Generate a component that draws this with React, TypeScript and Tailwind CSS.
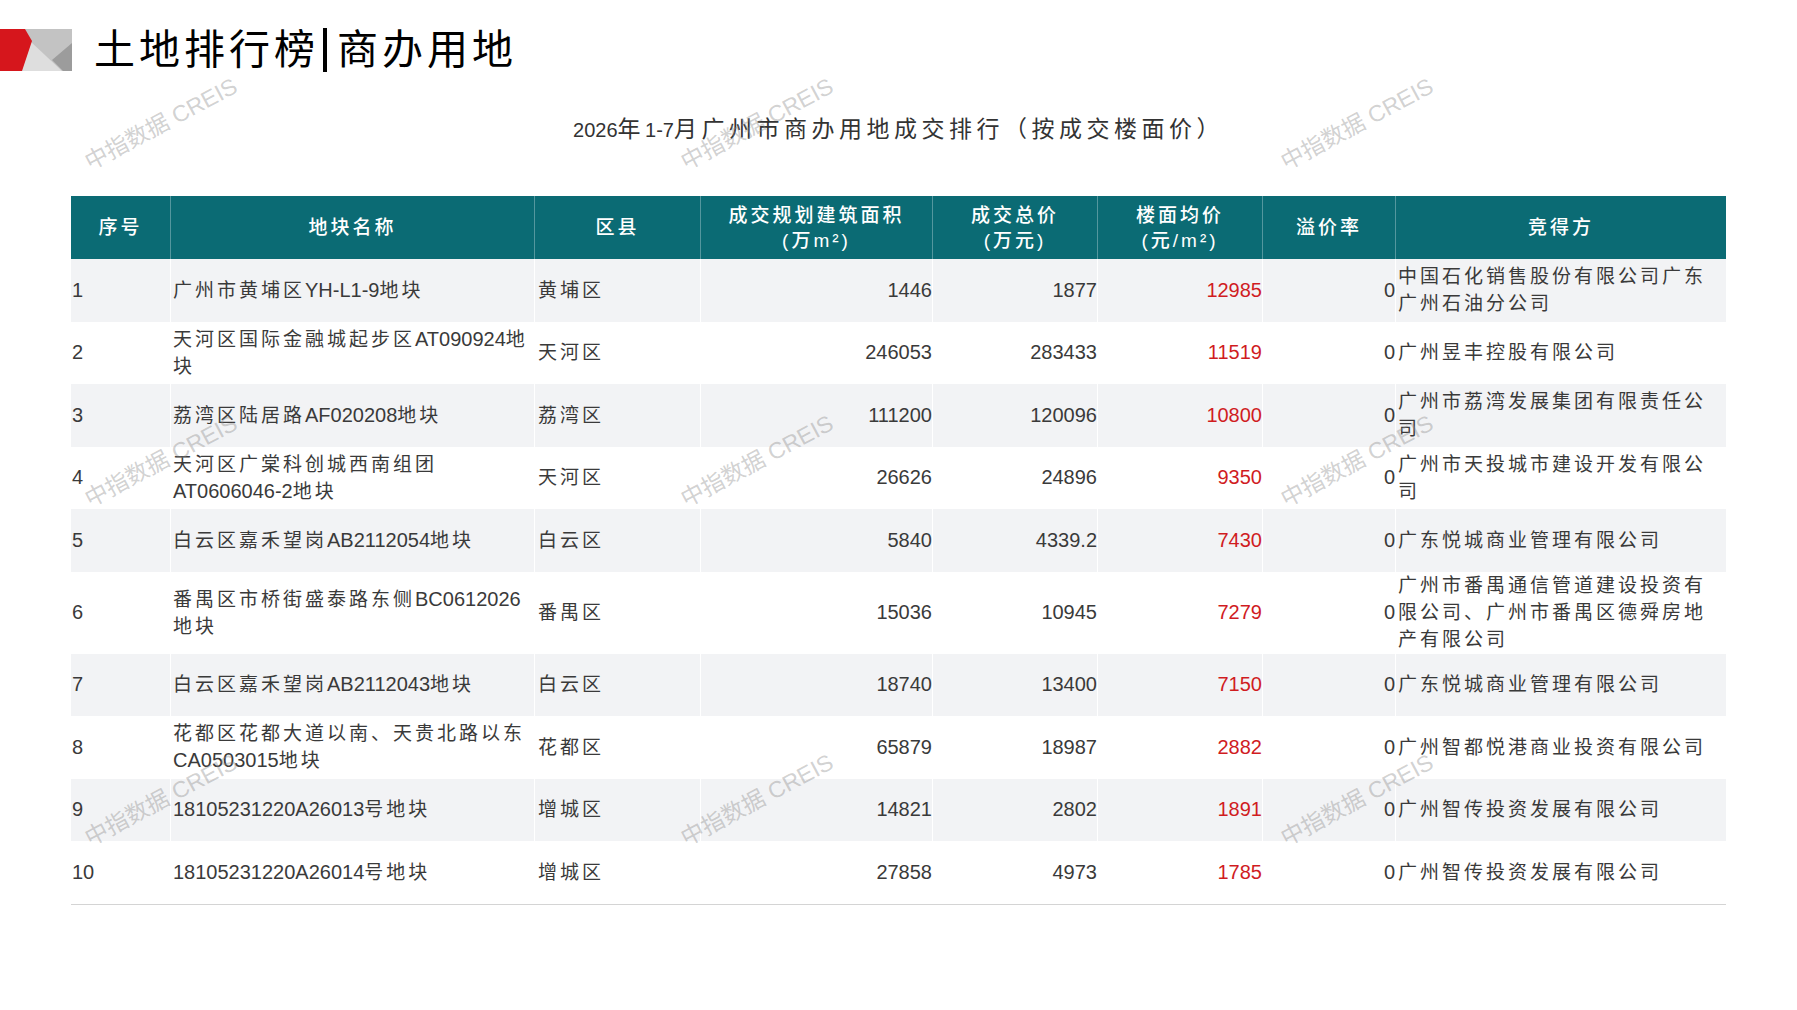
import React from "react";

const cjk = '"Liberation Sans","Noto Sans CJK SC",sans-serif';

type Row = {
  no: string;
  name: string[];
  district: string;
  area: string;
  total: string;
  price: string;
  premium: string;
  winner: string[];
  tall?: boolean;
};

const rows: Row[] = [
  { no: "1", name: ["广州市黄埔区YH-L1-9地块"], district: "黄埔区", area: "1446", total: "1877", price: "12985", premium: "0", winner: ["中国石化销售股份有限公司广东", "广州石油分公司"] },
  { no: "2", name: ["天河区国际金融城起步区AT090924地", "块"], district: "天河区", area: "246053", total: "283433", price: "11519", premium: "0", winner: ["广州昱丰控股有限公司"] },
  { no: "3", name: ["荔湾区陆居路AF020208地块"], district: "荔湾区", area: "111200", total: "120096", price: "10800", premium: "0", winner: ["广州市荔湾发展集团有限责任公", "司"] },
  { no: "4", name: ["天河区广棠科创城西南组团", "AT0606046-2地块"], district: "天河区", area: "26626", total: "24896", price: "9350", premium: "0", winner: ["广州市天投城市建设开发有限公", "司"] },
  { no: "5", name: ["白云区嘉禾望岗AB2112054地块"], district: "白云区", area: "5840", total: "4339.2", price: "7430", premium: "0", winner: ["广东悦城商业管理有限公司"] },
  { no: "6", name: ["番禺区市桥街盛泰路东侧BC0612026", "地块"], district: "番禺区", area: "15036", total: "10945", price: "7279", premium: "0", winner: ["广州市番禺通信管道建设投资有", "限公司、广州市番禺区德舜房地", "产有限公司"], tall: true },
  { no: "7", name: ["白云区嘉禾望岗AB2112043地块"], district: "白云区", area: "18740", total: "13400", price: "7150", premium: "0", winner: ["广东悦城商业管理有限公司"] },
  { no: "8", name: ["花都区花都大道以南、天贵北路以东", "CA0503015地块"], district: "花都区", area: "65879", total: "18987", price: "2882", premium: "0", winner: ["广州智都悦港商业投资有限公司"] },
  { no: "9", name: ["18105231220A26013号地块"], district: "增城区", area: "14821", total: "2802", price: "1891", premium: "0", winner: ["广州智传投资发展有限公司"] },
  { no: "10", name: ["18105231220A26014号地块"], district: "增城区", area: "27858", total: "4973", price: "1785", premium: "0", winner: ["广州智传投资发展有限公司"] },
];

const marks = [
  "left-[161px] top-[124px]",
  "left-[757px] top-[124px]",
  "left-[1357px] top-[124px]",
  "left-[161px] top-[461px]",
  "left-[757px] top-[461px]",
  "left-[1357px] top-[461px]",
  "left-[161px] top-[800px]",
  "left-[757px] top-[800px]",
  "left-[1357px] top-[800px]",
];

// latin runs keep normal spacing, CJK gets the wide tracking
const Mixed: React.FC<{ text: string }> = ({ text }) => (
  <>
    {text.split(/([A-Za-z0-9.\-]+)/).map((p, i) =>
      /^[A-Za-z0-9.\-]+$/.test(p) ? (
        <span key={i} className="tracking-normal text-[20px]">
          {p}
        </span>
      ) : (
        <span key={i}>{p}</span>
      )
    )}
  </>
);

const Logo = () => (
  <svg width="72" height="42" viewBox="0 0 72 42">
    <rect x="18" y="0" width="54" height="42" fill="#c3c3c3" />
    <polygon points="30,12 20,42 62,42" fill="#dedede" />
    <polygon points="72,14 52,31 63,42 72,42" fill="#9c9c9c" />
    <polygon points="0,0 25,0 32,12 22,42 0,42" fill="#d6161c" />
  </svg>
);

const App: React.FC = () => {
  return (
    <div className="relative w-[1797px] h-[1010px] bg-white overflow-hidden" style={{ fontFamily: cjk }}>
      {/* title bar */}
      <div className="flex items-center pt-[28px]">
        <Logo />
        <div className="ml-[22px] flex items-center text-[41px] leading-none tracking-[4px] text-black">
          <span>土地排行榜</span>
          <span className="ml-[4px] mr-[10px] w-[4px] h-[44px] bg-black" />
          <span>商办用地</span>
        </div>
      </div>

      <div className="mt-[42px] text-center text-[23px] leading-[30px] tracking-[4.5px] text-[#333]">
        <Mixed text="2026年1-7月广州市商办用地成交排行（按成交楼面价）" />
      </div>

      {/* table */}
      <div className="ml-[71px] mt-[51px] w-[1655px] border-b border-[#d4d4d4]">
        <div className="grid grid-cols-[100px_364px_166px_232px_165px_165px_133px_330px] h-[63px] bg-[#0b6b74] text-white text-[19px] leading-[25px] tracking-[3px] font-medium">
          <div className="flex items-center justify-center border-r border-white/30">序号</div>
          <div className="flex items-center justify-center border-r border-white/30">地块名称</div>
          <div className="flex items-center justify-center border-r border-white/30">区县</div>
          <div className="flex flex-col items-center justify-center border-r border-white/30">
            <span>成交规划建筑面积</span>
            <span>(万m²)</span>
          </div>
          <div className="flex flex-col items-center justify-center border-r border-white/30">
            <span>成交总价</span>
            <span>(万元)</span>
          </div>
          <div className="flex flex-col items-center justify-center border-r border-white/30">
            <span>楼面均价</span>
            <span>(元/m²)</span>
          </div>
          <div className="flex items-center justify-center border-r border-white/30">溢价率</div>
          <div className="flex items-center justify-center">竞得方</div>
        </div>

        {rows.map((r, i) => (
          <div
            key={r.no}
            className={
              "grid grid-cols-[100px_364px_166px_232px_165px_165px_133px_330px] text-[19px] leading-[27px] text-[#3a3a3a] " +
              (r.tall ? "h-[82px] " : "h-[62.5px] ") +
              (i % 2 === 0 ? "bg-[#f2f3f5]" : "bg-white")
            }
          >
            <div className="flex items-center pl-[1px] text-[20px] border-r border-white">{r.no}</div>
            <div className="flex flex-col justify-center pl-[2px] tracking-[3px] border-r border-white">
              {r.name.map((l) => (
                <span key={l} className="whitespace-nowrap">
                  <Mixed text={l} />
                </span>
              ))}
            </div>
            <div className="flex items-center pl-[3px] tracking-[3px] border-r border-white">{r.district}</div>
            <div className="flex items-center justify-end text-[20px] border-r border-white">{r.area}</div>
            <div className="flex items-center justify-end text-[20px] border-r border-white">{r.total}</div>
            <div className="flex items-center justify-end text-[20px] text-[#d01c1f] border-r border-white">{r.price}</div>
            <div className="flex items-center justify-end text-[20px] border-r border-white">{r.premium}</div>
            <div className="flex flex-col justify-center pl-[2px] tracking-[3px]">
              {r.winner.map((l) => (
                <span key={l} className="whitespace-nowrap">
                  {l}
                </span>
              ))}
            </div>
          </div>
        ))}
      </div>

      {/* watermarks */}
      {marks.map((m) => (
        <div
          key={m}
          className={
            "pointer-events-none absolute -translate-x-1/2 -translate-y-1/2 -rotate-[28deg] whitespace-nowrap text-[23px] text-[#8a8a8a]/40 " +
            m
          }
        >
          中指数据 CREIS
        </div>
      ))}
    </div>
  );
};

export default App;
